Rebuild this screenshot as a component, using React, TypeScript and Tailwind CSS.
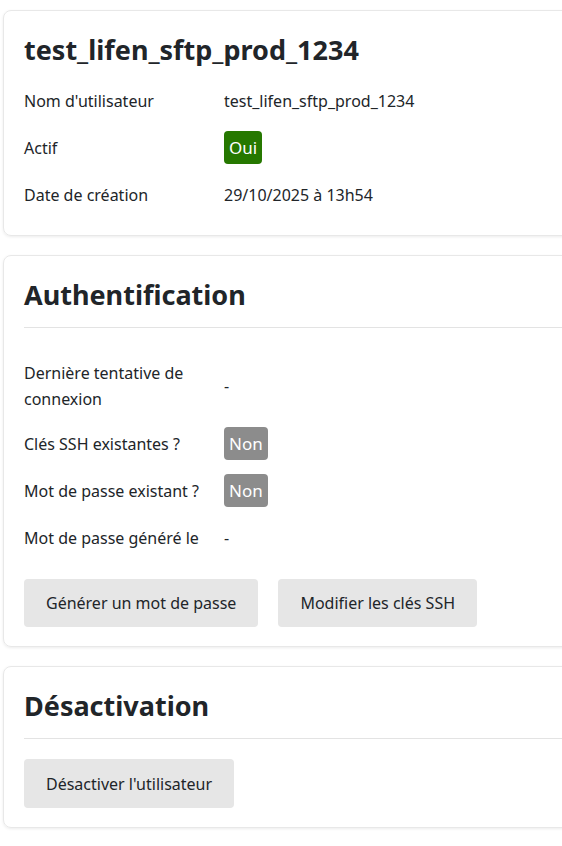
import React from "react";

const font = { fontFamily: '"Segoe UI", "Noto Sans", "Open Sans", sans-serif' };

function Row({ label, children, tall }: { label: React.ReactNode; children: React.ReactNode; tall?: boolean }) {
  return (
    <div className={`flex items-center ${tall ? "h-[69px]" : "h-[47px]"}`}>
      <div className="w-[200px] shrink-0 pr-4 leading-[26px]">{label}</div>
      <div className="leading-[26px]">{children}</div>
    </div>
  );
}

function Badge({ children, green }: { children: React.ReactNode; green?: boolean }) {
  return (
    <span
      className={`inline-flex h-[33px] items-center rounded-[4px] px-[5px] text-[17px] text-white ${
        green ? "bg-[#267800]" : "bg-[#8c8c8c]"
      }`}
    >
      {children}
    </span>
  );
}

function Button({ children }: { children: React.ReactNode }) {
  return (
    <button className="h-[48px] rounded-[4px] bg-[#e6e6e6] px-[22px] text-[16px] text-[#212529]">
      {children}
    </button>
  );
}

export default function App() {
  return (
    <div className="min-h-screen w-full overflow-hidden bg-white pl-[3px] pt-[10px] text-[16px] text-[#212529]" style={font}>
      <div className="flex w-[620px] flex-col gap-[19px]">
        <section className="rounded-[8px] border border-[#e8e8e8] px-5 pb-[17px] pt-5 shadow-[0_1px_3px_rgba(0,0,0,0.08)]">
          <h1 className="mb-2 flex h-[38px] items-center text-[27px] font-bold">test_lifen_sftp_prod_1234</h1>
          <Row label="Nom d'utilisateur">test_lifen_sftp_prod_1234</Row>
          <Row label="Actif">
            <Badge green>Oui</Badge>
          </Row>
          <Row label="Date de création">29/10/2025 à 13h54</Row>
        </section>

        <section className="rounded-[8px] border border-[#e8e8e8] px-5 pb-[19px] pt-5 shadow-[0_1px_3px_rgba(0,0,0,0.08)]">
          <h2 className="flex h-[38px] items-center text-[27px] font-bold">Authentification</h2>
          <div className="mt-[13px] border-t border-[#e3e3e3]" />
          <div className="mt-[23px]">
            <Row tall label={<>Dernière tentative de<br />connexion</>}>-</Row>
            <Row label="Clés SSH existantes ?">
              <Badge>Non</Badge>
            </Row>
            <Row label="Mot de passe existant ?">
              <Badge>Non</Badge>
            </Row>
            <Row label="Mot de passe généré le">-</Row>
          </div>
          <div className="mt-[18px] flex gap-5">
            <Button>Générer un mot de passe</Button>
            <Button>Modifier les clés SSH</Button>
          </div>
        </section>

        <section className="rounded-[8px] border border-[#e8e8e8] px-5 pb-[19px] pt-5 shadow-[0_1px_3px_rgba(0,0,0,0.08)]">
          <h2 className="flex h-[38px] items-center text-[27px] font-bold">Désactivation</h2>
          <div className="mt-[13px] border-t border-[#e3e3e3]" />
          <div className="mt-[20px] flex">
            <button className="h-[49px] rounded-[4px] bg-[#e6e6e6] px-[22px] text-[16px] text-[#212529]">
              Désactiver l'utilisateur
            </button>
          </div>
        </section>
      </div>
    </div>
  );
}
